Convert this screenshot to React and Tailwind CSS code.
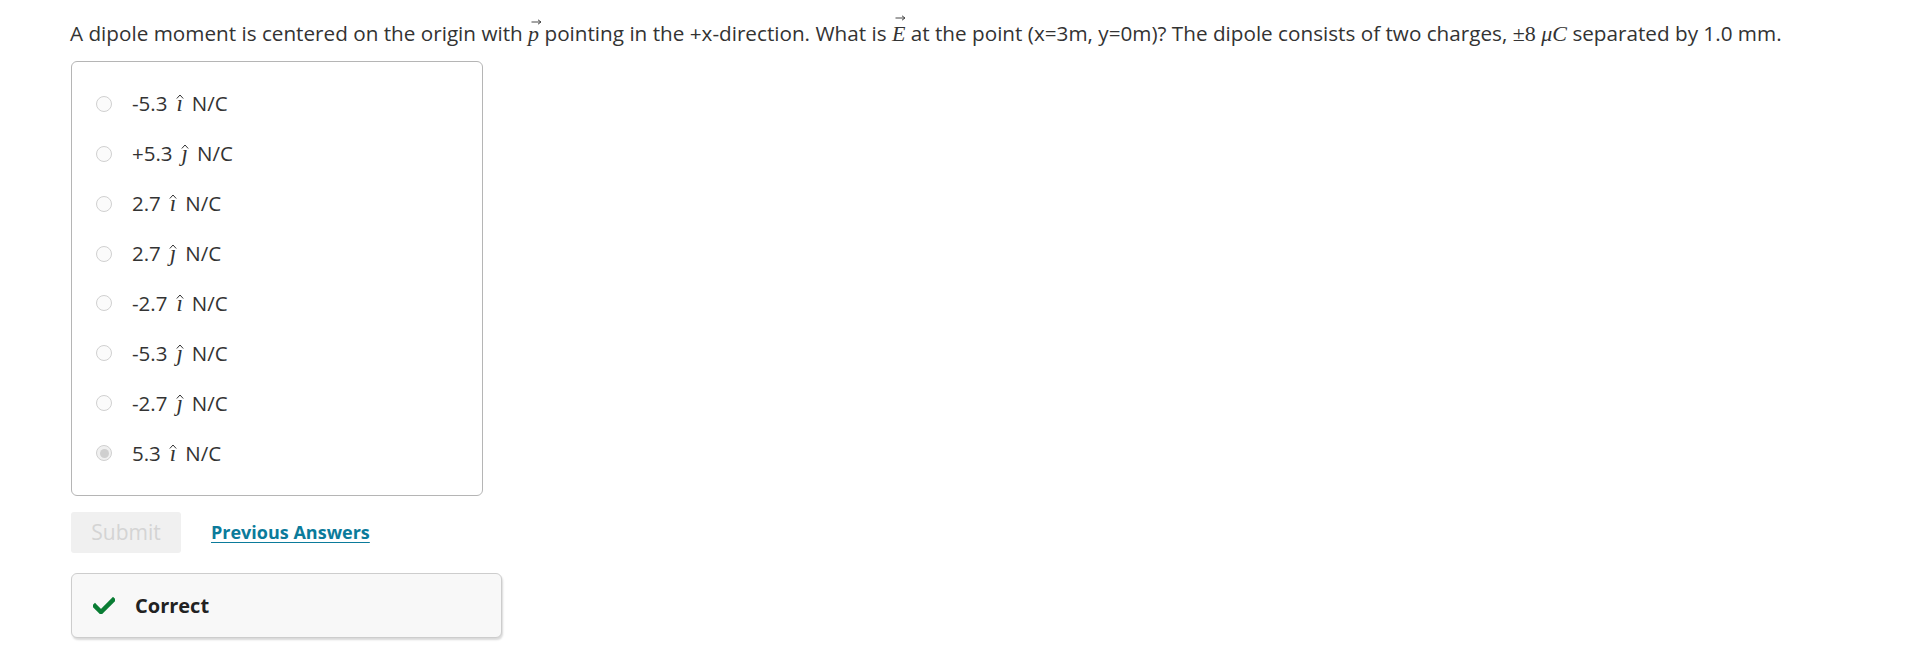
import React from "react";

const serif = { fontFamily: '"Liberation Serif", "DejaVu Serif", serif' };

const Vec = ({ children, top }) => (
  <span className="relative inline-block" style={serif}>
    <span className="italic text-[22px] leading-none">{children}</span>
    <svg className="absolute left-[3px]" style={{ top }} width="11" height="6" viewBox="0 0 11 6">
      <path d="M0.5 3 H9.5 M7 0.8 L10 3 L7 5.2" stroke="#333" strokeWidth="0.9" fill="none" />
    </svg>
  </span>
);

const Hat = ({ children }) => (
  <span className="relative inline-block px-[1px]" style={serif}>
    <span className="italic text-[23px] leading-none">{children}</span>
    <svg className="absolute left-1/2 -translate-x-1/2 top-[2px]" width="8" height="5" viewBox="0 0 8 5">
      <path d="M0.8 4.5 L4 1 L7.2 4.5" stroke="#333" strokeWidth="1" fill="none" />
    </svg>
  </span>
);

const options = [
  ["-5.3", "ı", false],
  ["+5.3", "ȷ", false],
  ["2.7", "ı", false],
  ["2.7", "ȷ", false],
  ["-2.7", "ı", false],
  ["-5.3", "ȷ", false],
  ["-2.7", "ȷ", false],
  ["5.3", "ı", true],
];

export default function App() {
  return (
    <div
      className="min-h-screen bg-white text-[#333] pl-[70px] pt-[17px]"
      style={{ fontFamily: '"Open Sans", "Noto Sans", sans-serif' }}
    >
      <p className="text-[20.7px] leading-[32px] whitespace-nowrap">
        A dipole moment is centered on the origin with <Vec top="1px">p</Vec> pointing in the +x-direction. What is{" "}
        <Vec top="-3px">E</Vec> at the point (x=3m, y=0m)? The dipole consists of two charges,{" "}
        <span style={serif} className="text-[22px]">
          ±8 <span className="italic">μC</span>
        </span>{" "}
        separated by 1.0 mm.
      </p>

      <div className="mt-[11px] ml-px w-[412px] h-[435px] border border-[#b5b5b5] rounded-[6px] py-[17px] pl-[24px] flex flex-col">
        {options.map(([num, u, sel], i) => (
          <div key={i} className="h-[50px] flex items-center gap-[20px]">
            <span
              className={
                "w-[16px] h-[16px] rounded-full border border-[#d0d0d0] flex items-center justify-center " +
                (sel ? "bg-[#f0f0f0]" : "bg-[#fbfbfb]")
              }
            >
              {sel && <span className="w-[9px] h-[9px] rounded-full bg-[#cfcfcf]" />}
            </span>
            <span className="text-[20.5px] leading-none flex items-baseline gap-[8px]">
              <span>{num}</span>
              <Hat>{u}</Hat>
              <span>N/C</span>
            </span>
          </div>
        ))}
      </div>

      <div className="mt-[16px] ml-px flex items-center gap-[30px]">
        <button className="w-[110px] h-[41px] rounded-[3px] bg-[#f0f0f0] text-[#d4d4d4] text-[21px]">
          Submit
        </button>
        <a href="#" className="text-[18px] font-bold text-[#0b7b9b] underline underline-offset-[3px]">
          Previous Answers
        </a>
      </div>

      <div className="mt-[20px] ml-px w-[431px] h-[65px] rounded-[6px] border border-[#cdcdcd] bg-[#f8f8f8] shadow-[1px_2px_2px_rgba(0,0,0,0.15)] flex items-center pl-[21px] gap-[20px]">
        <svg width="22" height="17" viewBox="0 0 22 17">
          <path d="M2 9 L8 15 L20 3" stroke="#0a7d34" strokeWidth="4.5" fill="none" strokeLinecap="square" />
        </svg>
        <span className="text-[20px] font-bold text-[#222]">Correct</span>
      </div>
    </div>
  );
}
